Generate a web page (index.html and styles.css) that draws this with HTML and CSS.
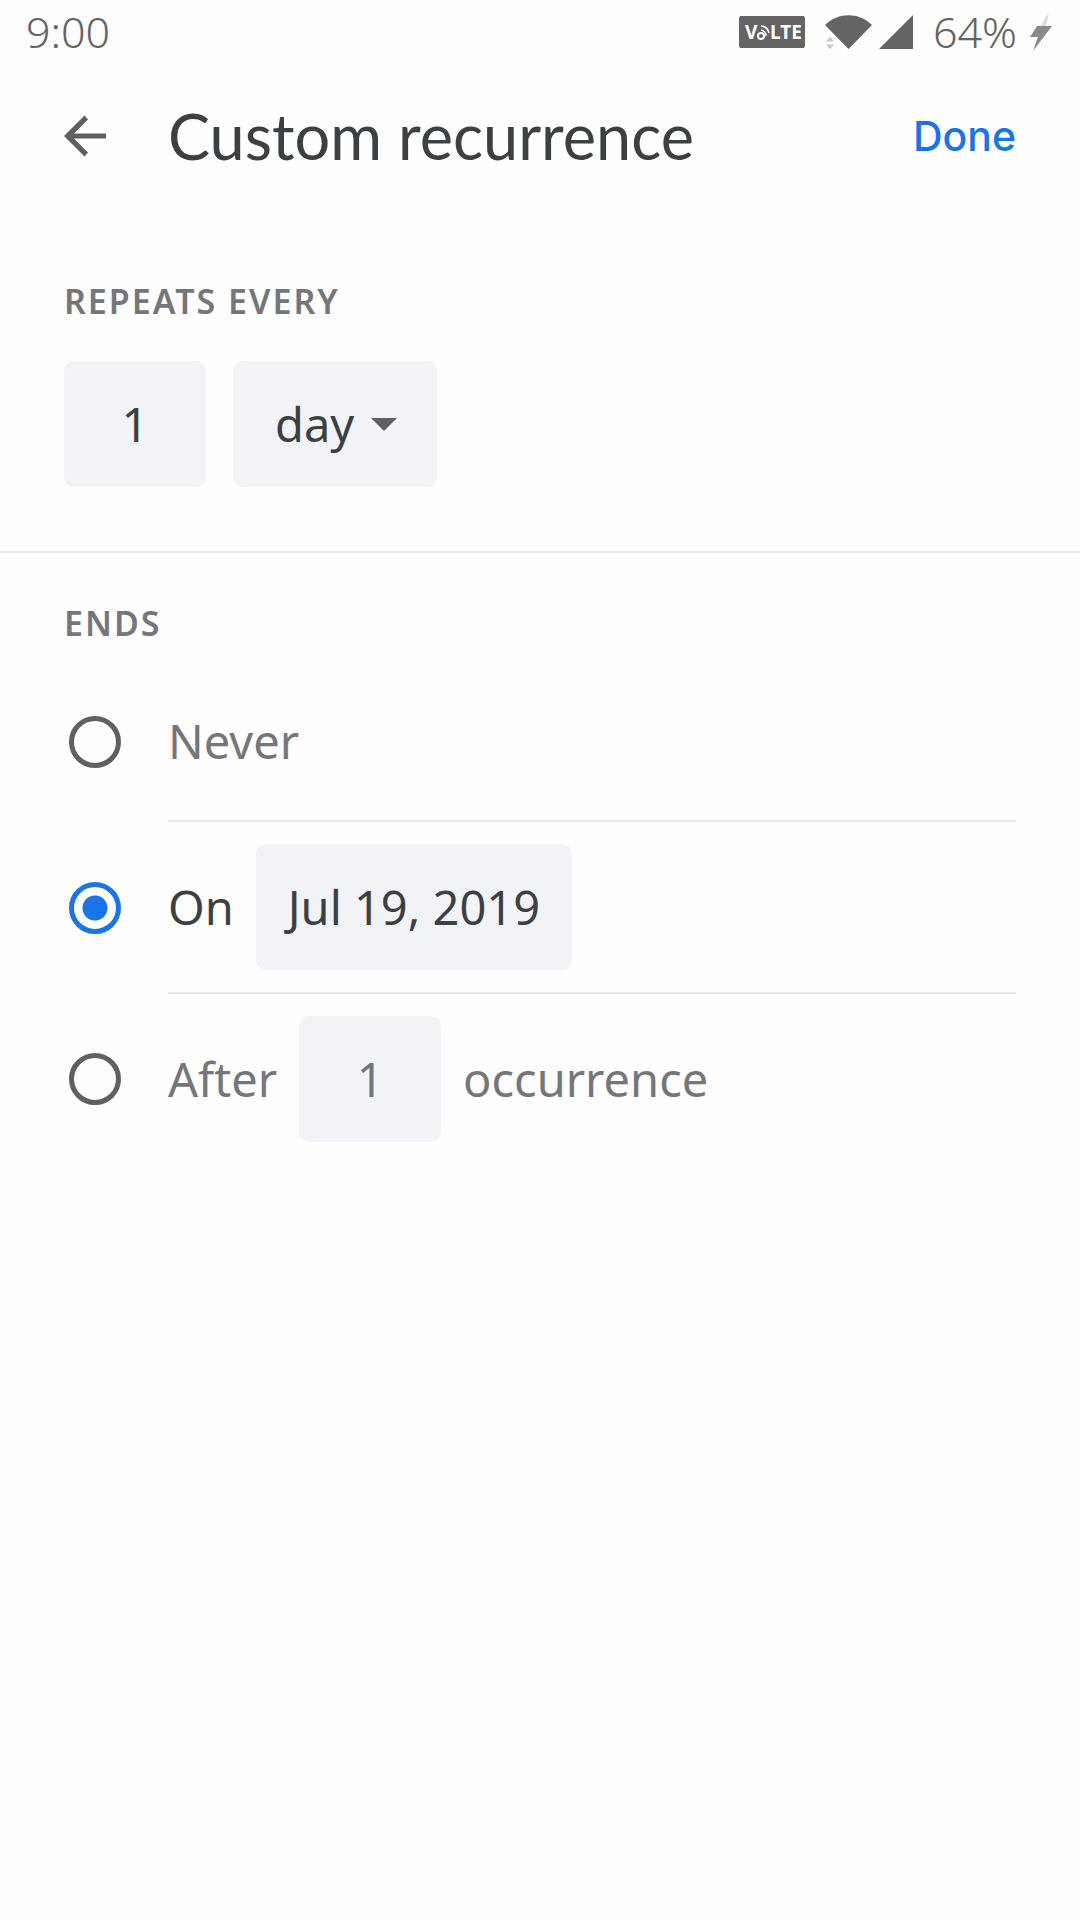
FILE: index.html
```html
<!DOCTYPE html>
<html lang="en">
  <head>
    <meta charset="UTF-8" />
    <meta name="viewport" content="width=device-width, initial-scale=1.0" />
    <title>Custom recurrence</title>
    <link rel="stylesheet" href="styles.css">
  </head>
  <body>
    <div class="status-bar">
      <span class="clock">9:00</span>
      <div class="status-icons">
        <svg class="volte" width="66" height="32" viewBox="0 0 66 32" role="img" aria-label="VoLTE">
          <rect width="66" height="32" rx="2" fill="#646464" />
          <g fill="#fff" font-family="Noto Sans, sans-serif" font-weight="700" font-size="19">
            <text x="6" y="23">V</text>
            <text x="31" y="23">LTE</text>
          </g>
          <circle cx="22" cy="20" r="3" fill="none" stroke="#fff" stroke-width="2" />
          <path d="M22 14a6 6 0 0 1 5 6M22 10a9 9 0 0 1 8 7" fill="none" stroke="#fff" stroke-width="1.500" />
        </svg>
        <svg class="wifi" width="47" height="34" viewBox="0 0 47 34" aria-hidden="true">
          <path d="M0 10C13-3 34-3 47 10L23.500 34z" fill="#646464" />
          <path d="M0 27l5-6 5 6zM0 29h10l-5 6z" fill="#c8c8c8" stroke="#fff" stroke-width="1" />
        </svg>
        <svg class="signal" width="34" height="34" viewBox="0 0 34 34" aria-hidden="true">
          <path d="M34 0v34H0z" fill="#646464" />
        </svg>
        <span class="battery">64%</span>
        <svg class="bolt" width="22" height="40" viewBox="0 0 22 40" aria-hidden="true">
          <path d="M19 0L10 15h6z" fill="#dcdcdc" />
          <path d="M7 14h15L3 39l5-14H0z" fill="#8a8a8a" />
        </svg>
      </div>
    </div>

    <header class="app-bar">
      <button class="back" type="button" aria-label="Back">
        <svg width="42" height="42" viewBox="0 0 42 42" aria-hidden="true">
          <path d="M42 18.500H10L24 4.500 20.500 0.500 0 21l20.500 20.500 3.500-4L10 23.500h32z" fill="#5f6064" />
        </svg>
      </button>
      <h1>Custom recurrence</h1>
      <button class="done" type="button">Done</button>
    </header>

    <main>
      <section class="repeats">
        <h2>REPEATS EVERY</h2>
        <div class="interval">
          <input class="field number" type="text" inputmode="numeric" value="1" aria-label="Interval">
          <div class="unit">
            <select class="field" aria-label="Unit">
              <option selected>day</option>
              <option>week</option>
              <option>month</option>
              <option>year</option>
            </select>
            <svg width="26" height="13" viewBox="0 0 26 13" aria-hidden="true">
              <path d="M0 0h26L13 13z" fill="#5f6064" />
            </svg>
          </div>
        </div>
      </section>

      <section class="ends">
        <h2>ENDS</h2>
        <div class="option">
          <input type="radio" name="ends" id="ends-never">
          <div class="option-body">
            <label for="ends-never">Never</label>
          </div>
        </div>
        <div class="option">
          <input type="radio" name="ends" id="ends-on" checked>
          <div class="option-body">
            <label for="ends-on">On</label>
            <button class="field date" type="button">Jul 19, 2019</button>
          </div>
        </div>
        <div class="option">
          <input type="radio" name="ends" id="ends-after">
          <div class="option-body">
            <label for="ends-after">After</label>
            <input class="field number" type="text" inputmode="numeric" value="1" aria-label="Occurrences">
            <label for="ends-after">occurrence</label>
          </div>
        </div>
      </section>
    </main>
  </body>
</html>
```
FILE: styles.css
```css
* {
  box-sizing: border-box;
}

body {
  margin: 0;
  background: #fefefe;
  color: #3c4043;
  font-family: "Noto Sans", sans-serif;
  font-size: 47px;
  line-height: 64px;
}

button,
input,
select {
  margin: 0;
  padding: 0;
  border: 0;
  background: none;
  color: inherit;
  font: inherit;
}

svg {
  display: block;
  flex: none;
}

/* Status bar */
.status-bar {
  display: flex;
  justify-content: space-between;
  align-items: center;
  height: 64px;
  padding: 0 28px 0 26px;
  color: #646464;
  font-size: 43px;
  font-weight: 300;
}

.status-icons {
  display: flex;
  align-items: center;
}

.wifi {
  margin-left: 20px;
}

.signal {
  margin-left: 7px;
}

.battery {
  margin-left: 20px;
}

.bolt {
  margin-left: 13px;
}

/* App bar */
.app-bar {
  display: flex;
  align-items: center;
  height: 144px;
  padding: 0 64px;
}

.back {
  width: 104px;
}

h1 {
  flex: 1;
  margin: 0;
  font-family: Lato, sans-serif;
  font-size: 63px;
  font-weight: 400;
}

.done {
  color: #1a73e8;
  font-family: Inter, sans-serif;
  font-size: 41px;
  font-weight: 500;
}

h2 {
  margin: 0;
  color: #757679;
  font-size: 34px;
  font-weight: 600;
  line-height: 48px;
  letter-spacing: 2px;
}

/* Fields */
.field {
  height: 126px;
  border-radius: 10px;
  background: #f2f3f7;
}

.number {
  width: 142px;
  text-align: center;
}

.repeats {
  padding: 69px 64px 64px;
  border-bottom: 2px solid #e8e8e8;
}

.interval {
  display: flex;
  gap: 27px;
  margin-top: 36px;
}

.unit {
  position: relative;
}

.unit select {
  width: 204px;
  padding-left: 42px;
  appearance: none;
}

.unit svg {
  position: absolute;
  top: 57px;
  right: 40px;
  pointer-events: none;
}

/* End options */
.ends {
  padding: 46px 64px;
}

.ends h2 {
  margin-bottom: 15px;
}

.option {
  display: flex;
  align-items: stretch;
  color: #757679;
}

.option:has(input:checked) {
  color: #3c4043;
}

.option input[type="radio"] {
  align-self: center;
  flex: none;
  width: 52px;
  height: 52px;
  margin: 0 47px 0 5px;
  border: 5px solid #5f6064;
  border-radius: 50%;
  appearance: none;
}

.option input[type="radio"]:checked {
  border-color: #1a73e8;
  background: radial-gradient(circle, #1a73e8 12px, transparent 13px);
}

.option-body {
  display: flex;
  flex: 1;
  align-items: center;
  gap: 22px;
  min-height: 160px;
  padding: 22px 0;
  border-bottom: 2px solid #e8e8e8;
}

.option:last-child .option-body {
  border-bottom: 0;
}

.date {
  padding: 0 32px;
}
```
